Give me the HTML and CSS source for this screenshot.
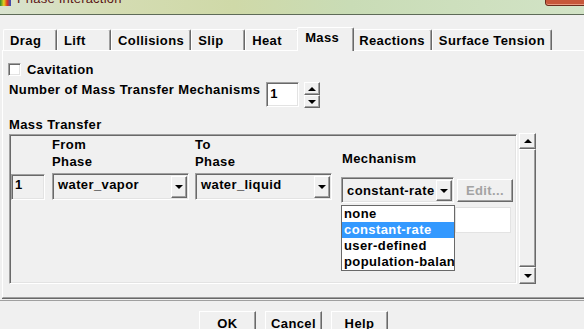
FILE: index.html
```html
<!DOCTYPE html>
<html lang="en">
<head>
  <meta charset="UTF-8">
  <title>Phase Interaction</title>
  <link rel="stylesheet" href="styles.css">
</head>
<body>
  <div class="window">
    <div class="titlebar">
      <span class="app-icon"></span>
      <span class="title">Phase Interaction</span>
      <span class="close-btn"></span>
    </div>

    <div class="tabs">
      <div class="tab">Drag</div>
      <div class="tab">Lift</div>
      <div class="tab">Collisions</div>
      <div class="tab">Slip</div>
      <div class="tab">Heat</div>
      <div class="tab active">Mass</div>
      <div class="tab">Reactions</div>
      <div class="tab">Surface Tension</div>
    </div>

    <div class="panel">
      <div class="check"><span class="check-box"></span>Cavitation</div>

      <div class="num-row">
        <span>Number of Mass Transfer Mechanisms</span>
        <div class="num-input">1</div>
        <div class="spin">
          <div class="spin-btn up"></div>
          <div class="spin-btn down"></div>
        </div>
      </div>

      <div class="group-label">Mass Transfer</div>
      <div class="group">
        <div class="frame">
          <div class="grid">
            <div></div>
            <div class="head">From<br>Phase</div>
            <div class="head">To<br>Phase</div>
            <div class="head end">Mechanism</div>
            <div></div>

            <div class="idx">1</div>
            <div class="combo"><span class="combo-text">water_vapor</span><span class="combo-btn"></span></div>
            <div class="combo"><span class="combo-text">water_liquid</span><span class="combo-btn"></span></div>
            <div class="mech">
              <div class="combo small"><span class="combo-text">constant-rate</span><span class="combo-btn"></span></div>
              <ul class="dropdown">
                <li>none</li>
                <li class="sel">constant-rate</li>
                <li>user-defined</li>
                <li>population-balance</li>
              </ul>
            </div>
            <div class="edit-col">
              <div class="btn disabled">Edit...</div>
              <div class="blank"></div>
            </div>
          </div>
        </div>
        <div class="scrollbar">
          <div class="sb-btn up"></div>
          <div class="sb-thumb"></div>
          <div class="sb-btn down"></div>
        </div>
      </div>
    </div>

    <div class="footer">
      <div class="btn">OK</div>
      <div class="btn">Cancel</div>
      <div class="btn">Help</div>
    </div>
  </div>
</body>
</html>
```

FILE: styles.css
```css
body { margin: 0; background: #f0f0f0; color: #000; font: bold 13px/17px "Liberation Sans", Arial, sans-serif; letter-spacing: 0.4px; overflow: hidden; }
.window { width: 584px; height: 329px; overflow: hidden; }

/* title bar */
.titlebar { height: 14px; display: flex; border-bottom: 1px solid #5e6b58; background: linear-gradient(to right, #d9e3cf 0%, #d4dcb2 20%, #cfd9a8 40%, #c9dcb6 60%, #d2e3c6 100%); overflow: hidden; }
.app-icon { width: 11px; height: 6px; background: linear-gradient(to right, #2a8a30, #e8d21c 35%, #e2361e 65%, #2a4fc0); }
.title { margin: -9px 0 0 6px; font: 13px/15px "Liberation Sans", Arial, sans-serif; color: #5a1414; letter-spacing: 0.2px; }
.close-btn { margin: -6px -8px 0 auto; width: 45px; height: 10px; background: #c7573a; border: 1px solid #6b2b1b; border-radius: 3px; box-shadow: inset 0 -1px #e89a80; }

/* tabs */
.tabs { display: flex; align-items: flex-end; height: 23px; margin: 12px 0 0 3px; }
.tab { position: relative; height: 21px; min-width: 54px; padding: 2px 6px 0; box-sizing: border-box; border: 1px solid #fff; border-bottom: 0; border-right-color: #696969; box-shadow: inset -1px 0 #a0a0a0; border-radius: 2px 2px 0 0; white-space: nowrap; }
.tab.active { z-index: 1; height: 24px; min-width: 57px; margin: 0 -2px -1px; padding: 1px 7px 0; background: #f0f0f0; }

/* main panel */
.panel { margin-left: 2px; padding: 10px 0 13px 6px; border-top: 1px solid #fff; border-left: 1px solid #fff; border-bottom: 1px solid #a0a0a0; box-shadow: 0 1px #696969; }
.check { display: flex; align-items: flex-start; gap: 6px; margin-left: -1px; }
.check-box { width: 13px; height: 13px; margin-top: 2px; box-sizing: border-box; background: #fff; border: 1px solid; border-color: #a0a0a0 #fff #fff #a0a0a0; box-shadow: inset 1px 1px #696969, inset -1px -1px #e3e3e3; }

.num-row { display: flex; align-items: flex-start; margin-top: 3px; }
.num-input { width: 33px; height: 25px; margin: 1px 0 0 6px; padding: 2px 0 0 3px; box-sizing: border-box; background: #fff; border: 1px solid; border-color: #a0a0a0 #fff #fff #a0a0a0; box-shadow: inset 1px 1px #696969, inset -1px -1px #e3e3e3; }
.spin { display: flex; flex-direction: column; margin: 1px 0 0 5px; }
.spin-btn { width: 16px; height: 13px; box-sizing: border-box; display: flex; align-items: center; justify-content: center; border: 1px solid; border-color: #fff #696969 #696969 #fff; box-shadow: inset -1px -1px #a0a0a0; }
.spin-btn.up::after, .sb-btn.up::after { content: ""; border: 4px solid transparent; border-top: 0; border-bottom: 4px solid #000; }
.spin-btn.down::after, .sb-btn.down::after, .combo-btn::after { content: ""; border: 4px solid transparent; border-bottom: 0; border-top: 4px solid #000; }

.group-label { margin-top: 8px; }
.group { display: flex; align-items: flex-start; gap: 2px; }
.frame { width: 508px; height: 150px; margin-top: 1px; box-sizing: border-box; border: 1px solid; border-color: #a0a0a0 #fff #fff #a0a0a0; box-shadow: inset 1px 1px #696969, inset -1px -1px #e3e3e3; padding: 1px 0 0 1px; }
.grid { display: grid; grid-template-columns: 41px 143px 146px 116px 56px; row-gap: 3px; align-items: start; }
.head.end { align-self: end; padding: 0 0 3px 1px; }

.idx, .combo, .blank { box-sizing: border-box; border: 1px solid; border-color: #a0a0a0 #fff #fff #a0a0a0; box-shadow: inset 1px 1px #696969, inset -1px -1px #e3e3e3; }
.idx { width: 34px; height: 26px; margin-top: 1px; padding: 1px 0 0 3px; }
.combo { width: 137px; height: 27px; display: flex; padding: 2px 1px 1px 2px; }
.combo-text { flex: 1; padding: 0 0 0 3px; white-space: nowrap; overflow: hidden; }
.combo-btn { width: 16px; display: flex; align-items: center; justify-content: center; box-sizing: border-box; border: 1px solid; border-color: #fff #696969 #696969 #fff; box-shadow: inset -1px -1px #a0a0a0; }
.mech { position: relative; margin-top: 4px; }
.combo.small { width: 113px; height: 26px; }
.combo.small .combo-text { padding-top: 2px; }
.dropdown { position: absolute; left: 0; top: 28px; width: 114px; margin: 0; padding: 0; list-style: none; box-sizing: border-box; background: #fff; border: 1px solid #696969; z-index: 2; }
.dropdown li { height: 16px; line-height: 16px; padding-left: 2px; white-space: nowrap; overflow: hidden; }
.dropdown li.sel { background: #3399ff; color: #fff; }

.edit-col { margin-top: 6px; }
.btn { box-sizing: border-box; border: 1px solid; border-color: #fff #696969 #696969 #fff; box-shadow: inset -1px -1px #a0a0a0; text-align: center; }
.btn.disabled { width: 56px; height: 23px; padding-top: 2px; color: #a3a3a3; }
.blank { width: 56px; height: 26px; margin: 5px 0 0 -2px; background: #fff; border-color: #e0e0e0 #e3e3e3 #e3e3e3 #e0e0e0; box-shadow: none; }

.scrollbar { width: 17px; height: 151px; display: flex; flex-direction: column; }
.sb-btn, .sb-thumb { box-sizing: border-box; border: 1px solid; border-color: #fff #696969 #696969 #fff; box-shadow: inset -1px -1px #a0a0a0; }
.sb-btn { height: 16px; display: flex; align-items: center; justify-content: center; }
.sb-btn.down { height: 17px; }
.sb-thumb { flex: 1; }

/* footer */
.footer { display: flex; justify-content: center; gap: 9px; margin-top: 2px; padding: 10px 0 0 3px; border-top: 1px solid #a0a0a0; }
.footer .btn { width: 57px; height: 25px; padding-top: 3px; }
```
